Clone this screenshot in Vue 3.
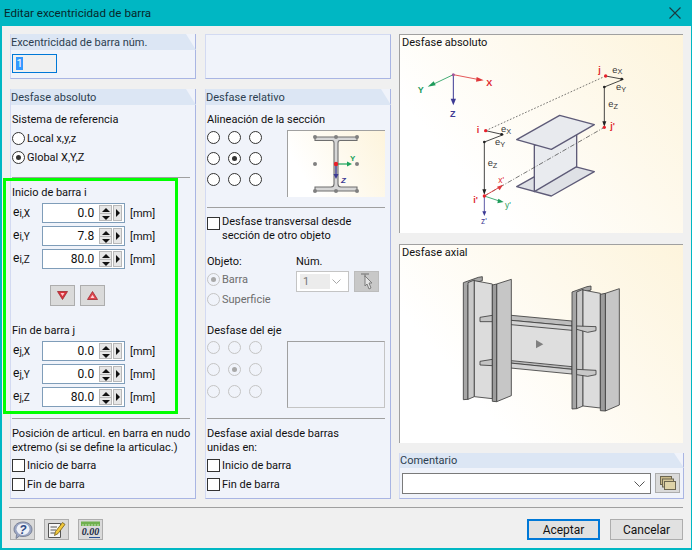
<template>
  <div class="window">
    <div class="titlebar">
      <span>Editar excentricidad de barra</span>
      <svg class="close" width="12" height="12" viewBox="0 0 12 12">
        <path d="M0.5 0.5 L11.5 11.5 M11.5 0.5 L0.5 11.5" stroke="#1a3a40" stroke-width="1.1" fill="none" />
      </svg>
    </div>

    <div class="main">
      <!-- columna izquierda -->
      <div class="col col-a">
        <section class="panel panel-num">
          <div class="panel-head">Excentricidad de barra núm.</div>
          <div class="num-input"><span class="num-sel">1</span></div>
        </section>

        <section class="panel panel-tall">
          <div class="panel-head">Desfase absoluto</div>
          <div class="line mt7">Sistema de referencia</div>
          <div class="choice mt3"><span class="radio"></span>Local x,y,z</div>
          <div class="choice"><span class="radio on"></span>Global X,Y,Z</div>
          <div class="sep sep-a"></div>

          <div class="line mt7">Inicio de barra i</div>
          <div class="spin-rows">
            <div v-for="row in startRows" :key="row.axis" class="spin-row">
              <span class="spin-label">e<sub>i,{{ row.axis }}</sub></span>
              <div class="spin-input">
                <span class="spin-value">{{ row.value }}</span>
                <span class="spin-ud"><i class="up"></i><i class="down"></i></span>
                <span class="spin-more"><i></i></span>
              </div>
              <span class="unit">[mm]</span>
            </div>
          </div>

          <div class="swap-btns">
            <button class="tool">
              <svg width="11" height="9" viewBox="0 0 11 9">
                <path d="M0.5 0.5 H10.5 L5.5 8.5 Z" fill="#d8323c" stroke="#a02a30" stroke-width="0.8" />
                <path d="M3.5 2 H7.5 L5.5 5.2 Z" fill="#ffc4c8" />
              </svg>
            </button>
            <button class="tool">
              <svg width="11" height="9" viewBox="0 0 11 9">
                <path d="M0.5 8.5 H10.5 L5.5 0.5 Z" fill="#e0464e" stroke="#a02a30" stroke-width="0.8" />
                <path d="M3.5 7 H7.5 L5.5 3.8 Z" fill="#ffd0d4" />
              </svg>
            </button>
          </div>

          <div class="line fin-title">Fin de barra j</div>
          <div class="spin-rows">
            <div v-for="row in endRows" :key="row.axis" class="spin-row">
              <span class="spin-label">e<sub>j,{{ row.axis }}</sub></span>
              <div class="spin-input">
                <span class="spin-value">{{ row.value }}</span>
                <span class="spin-ud"><i class="up"></i><i class="down"></i></span>
                <span class="spin-more"><i></i></span>
              </div>
              <span class="unit">[mm]</span>
            </div>
          </div>

          <div class="sep sep-b"></div>
          <div class="line mt7">Posición de articul. en barra en nudo</div>
          <div class="line">extremo (si se define la articulac.)</div>
          <div class="choice mt2"><span class="check"></span>Inicio de barra</div>
          <div class="choice"><span class="check"></span>Fin de barra</div>
        </section>

        <div class="green-frame"></div>
      </div>

      <!-- columna central -->
      <div class="col col-b">
        <section class="panel panel-num panel-blank"></section>

        <section class="panel panel-tall">
          <div class="panel-head">Desfase relativo</div>
          <div class="line mt7">Alineación de la sección</div>
          <div class="align-row">
            <div class="align-grid">
              <span v-for="n in 9" :key="n" class="radio" :class="{ on: n === 5 }"></span>
            </div>
            <div class="section-box">
              <svg width="98" height="67" viewBox="0 0 98 67">
                <path d="M28 7 H70 V10.5 H53 Q51 10.5 51 13 V54 Q51 57 54 57 H70 V61 H28 V57 H44 Q47 57 47 54 V13 Q47 10.5 45 10.5 H28 Z" fill="#d6d6d6" stroke="#6e6e6e" stroke-width="1.1" />
                <g fill="#808080">
                  <circle cx="28" cy="7" r="2" /><circle cx="49" cy="7" r="2" /><circle cx="70" cy="7" r="2" />
                  <circle cx="28" cy="34" r="2" /><circle cx="70" cy="34" r="2" />
                  <circle cx="28" cy="61" r="2" /><circle cx="49" cy="61" r="2" /><circle cx="70" cy="61" r="2" />
                </g>
                <path d="M49 34 H62" stroke="#1ba35c" stroke-width="1.2" />
                <path d="M60 31.5 L65 34 L60 36.5 Z" fill="#1ba35c" />
                <path d="M49 34 V46" stroke="#3c3a92" stroke-width="1.4" />
                <path d="M46.5 44 L49 49 L51.5 44 Z" fill="#3c3a92" />
                <circle cx="49" cy="34" r="2.2" fill="#e8202a" />
                <text x="63" y="31" class="sec-y">Y</text>
                <text x="54" y="53" class="sec-z">Z</text>
              </svg>
            </div>
          </div>
          <div class="sep sep-c"></div>

          <div class="check-long">
            <span class="check"></span>
            <span>Desfase transversal desde<br />sección de otro objeto</span>
          </div>

          <div class="object-row">
            <div class="object-left">
              <div class="line">Objeto:</div>
              <div class="choice off mt1"><span class="radio off on"></span>Barra</div>
              <div class="choice off"><span class="radio off"></span>Superficie</div>
            </div>
            <div>
              <div class="line">Núm.</div>
              <div class="combo-row">
                <div class="mini-combo">
                  <span class="mini-value">1</span>
                  <svg width="9" height="5" viewBox="0 0 9 5"><path d="M0.5 0.5 L4.5 4.5 L8.5 0.5" fill="none" stroke="#a8a8a8" /></svg>
                </div>
                <button class="pick">
                  <svg width="14" height="17" viewBox="0 0 14 17">
                    <path d="M1 1 H9 M5 1 V4" stroke="#8c8c8c" stroke-width="1.6" fill="none" />
                    <path d="M5 3 L12 10 H9 L11 15 L9 16 L7 11 L5 13 Z" fill="#e4e4e4" stroke="#7d7d7d" />
                  </svg>
                </button>
              </div>
            </div>
          </div>

          <div class="line axis-title">Desfase del eje</div>
          <div class="align-row">
            <div class="align-grid wide">
              <span v-for="n in 9" :key="n" class="radio off" :class="{ on: n === 5 }"></span>
            </div>
            <div class="section-box empty"></div>
          </div>
          <div class="sep sep-c"></div>

          <div class="line mt7">Desfase axial desde barras</div>
          <div class="line">unidas en:</div>
          <div class="choice mt2"><span class="check"></span>Inicio de barra</div>
          <div class="choice"><span class="check"></span>Fin de barra</div>
        </section>
      </div>

      <!-- columna derecha -->
      <div class="col col-c">
        <div class="picture">
          <span class="picture-title">Desfase absoluto</span>
          <svg width="284" height="199" viewBox="12 12 852 597">
            <!-- perfil -->
            <g stroke="#5e5b78" stroke-width="4" stroke-linejoin="round">
              <path d="M365 470 L494 398 L598 425 L469 498 Z" fill="#dfe1e6" />
              <path d="M418 346 L545 312 V410 L418 485 Z" fill="#e9ebef" />
              <path d="M365 329 L494 256 L598 284 L469 358 Z" fill="#e8eaee" />
            </g>
            <!-- lineas de desfase -->
            <path d="M272 302 L632 138" stroke="#333" stroke-width="2" stroke-dasharray="5 5" fill="none" />
            <path d="M268 498 L628 292" stroke="#333" stroke-width="2" stroke-dasharray="14 5 3 5" fill="none" />
            <!-- ejes globales -->
            <path d="M175 134 L258 150" stroke="#e0373a" stroke-width="2.5" />
            <path d="M245 141 L266 151 L243 155 Z" fill="#e0373a" />
            <path d="M175 134 L110 165" stroke="#1f9c5c" stroke-width="2.5" />
            <path d="M98 170 L116 154 L122 166 Z" fill="#1f9c5c" />
            <path d="M175 134 V215" stroke="#3d3a94" stroke-width="3" />
            <path d="M167 206 H183 L175 226 Z" fill="#3d3a94" />
            <circle cx="175" cy="134" r="4.5" fill="#a0569a" />
            <text x="274" y="167" class="d-big red">X</text>
            <text x="68" y="190" class="d-big green">Y</text>
            <text x="165" y="261" class="d-big blue">Z</text>
            <!-- nudo j -->
            <g stroke="#222" stroke-width="2.5" fill="none">
              <path d="M632 138 L685 148 L628 171 V285" />
              <path d="M272 302 L325 314 L268 336 V490" />
            </g>
            <g fill="#222">
              <circle cx="680" cy="147" r="4" /><circle cx="628" cy="171" r="4" />
              <circle cx="320" cy="313" r="4" /><circle cx="268" cy="336" r="4" />
              <path d="M622 274 H634 L628 290 Z" /><path d="M262 478 H274 L268 494 Z" />
            </g>
            <g class="d-e">
              <text x="652" y="128">e<tspan class="d-s" dy="5">X</tspan></text>
              <text x="663" y="180">e<tspan class="d-s" dy="5">Y</tspan></text>
              <text x="640" y="232">e<tspan class="d-s" dy="5">Z</tspan></text>
              <text x="318" y="306">e<tspan class="d-s" dy="5">X</tspan></text>
              <text x="300" y="345">e<tspan class="d-s" dy="5">Y</tspan></text>
              <text x="278" y="408">e<tspan class="d-s" dy="5">Z</tspan></text>
            </g>
            <!-- ejes locales -->
            <path d="M268 498 L316 470" stroke="#e0373a" stroke-width="2.5" />
            <path d="M306 470 L324 464 L314 481 Z" fill="#e0373a" />
            <path d="M268 498 L316 514" stroke="#1f9c5c" stroke-width="2.5" />
            <path d="M310 506 L326 516 L307 520 Z" fill="#1f9c5c" />
            <path d="M268 498 V546" stroke="#3d3a94" stroke-width="2.5" />
            <path d="M262 544 H274 L268 558 Z" fill="#3d3a94" />
            <circle cx="272" cy="302" r="5" fill="#e8202a" /><circle cx="632" cy="138" r="5" fill="#e8202a" />
            <circle cx="628" cy="292" r="5" fill="#e8202a" /><circle cx="268" cy="498" r="5" fill="#e8202a" />
            <text x="245" y="310" class="d-big red">i</text>
            <text x="610" y="128" class="d-big red">j</text>
            <text x="646" y="298" class="d-big red">j'</text>
            <text x="235" y="518" class="d-big red">i'</text>
            <text x="310" y="458" class="d-mid red">x'</text>
            <text x="330" y="534" class="d-mid green">y'</text>
            <text x="258" y="581" class="d-mid blue">z'</text>
          </svg>
        </div>

        <div class="picture">
          <span class="picture-title">Desfase axial</span>
          <svg width="284" height="199" viewBox="12 12 852 597" stroke="#3c3c3c" stroke-width="2.5" stroke-linejoin="round">
            <!-- columna izquierda, parte trasera -->
            <path d="M205 128 L250 112 L262 110 V122 L219 135 V478 L205 479 Z" fill="#a6a6a6" />
            <path d="M219 128 L238 120 V470 L219 478 Z" fill="#c9c9c9" />
            <path d="M238 122 L292 132 V476 L238 470 Z" fill="#dcdcdc" />
            <!-- viga -->
            <path d="M325 250 L531 268 V385 L325 368 Z" fill="#dedede" />
            <path d="M255 232 L292 226 V245 L255 245 Z" fill="#c4c4c4" />
            <path d="M305 237 L349 226 L531 243 V258 Z" fill="#bdbdbd" />
            <path d="M305 237 L531 258 V271 L305 250 Z" fill="#d4d4d4" />
            <path d="M255 364 L292 358 V377 L255 375 Z" fill="#c4c4c4" />
            <path d="M305 365 L349 362 L531 380 V388 Z" fill="#bdbdbd" />
            <path d="M305 365 L531 388 V402 L305 380 Z" fill="#d4d4d4" />
            <path d="M423 300 L445 313 L423 325 Z" fill="#808080" stroke="none" />
            <!-- columna izquierda, ala delantera -->
            <path d="M305 132 L349 118 V467 L305 485 Z" fill="#c6c6c6" />
            <path d="M292 135 L305 132 V485 L292 484 Z" fill="#9c9c9c" />
            <!-- columna derecha -->
            <path d="M531 156 L576 140 L588 138 V150 L545 163 V506 L531 507 Z" fill="#a6a6a6" />
            <path d="M545 156 L564 148 V498 L545 506 Z" fill="#c9c9c9" />
            <path d="M564 150 L616 160 V504 L564 498 Z" fill="#dcdcdc" />
            <path d="M545 258 L603 260 V272 L578 277 L545 268 Z" fill="#c8c8c8" />
            <path d="M545 388 L603 391 V404 L578 409 L545 404 Z" fill="#c8c8c8" />
            <path d="M631 160 L673 146 V495 L631 513 Z" fill="#c6c6c6" />
            <path d="M616 163 L631 160 V513 L616 512 Z" fill="#9c9c9c" />
          </svg>
        </div>

        <section class="panel panel-comment">
          <div class="panel-head">Comentario</div>
          <div class="comment-row">
            <div class="comment-combo">
              <svg width="11" height="6" viewBox="0 0 11 6"><path d="M0.5 0.5 L5.5 5.5 L10.5 0.5" fill="none" stroke="#555" /></svg>
            </div>
            <button class="tool comment-btn">
              <svg width="16" height="14" viewBox="0 0 16 14">
                <rect x="0.5" y="0.5" width="11" height="8" fill="#c9b98a" stroke="#6d6650" />
                <rect x="2.5" y="3" width="11" height="8" fill="#d5c799" stroke="#6d6650" />
                <rect x="4.5" y="5.5" width="11" height="8" fill="#dfd3a8" stroke="#6d6650" />
              </svg>
            </button>
          </div>
        </section>
      </div>
    </div>

    <div class="footer-sep"></div>
    <div class="footer">
      <div class="footer-tools">
        <button class="tool foot-btn">
          <svg width="20" height="18" viewBox="0 0 20 18">
            <path d="M10 1 C15 1 19 4 19 8.5 C19 13 15 15.5 10 15.5 C8.5 15.5 7.5 15.4 6.5 15 L3 17.5 L3.6 13.4 C2 12 1 10.5 1 8.5 C1 4 5 1 10 1 Z" fill="#9aa6c4" stroke="#6c7488" stroke-width="0.8" />
            <ellipse cx="10" cy="8.2" rx="6.5" ry="5.8" fill="#eef1f7" />
            <text x="10" y="13" class="help-mark">?</text>
          </svg>
        </button>
        <button class="tool foot-btn">
          <svg width="19" height="18" viewBox="0 0 19 18">
            <path d="M1.5 2.5 H13.5 V16.5 H1.5 Z" fill="#f6f6f6" stroke="#555" />
            <path d="M3.5 6 H10 M3.5 9 H9 M3.5 12 H8" stroke="#555" />
            <path d="M7.5 14.5 L8.5 10.5 L15.5 1.5 L18 3.4 L11 12.6 Z" fill="#f2c83a" stroke="#6e5a16" stroke-width="0.8" />
          </svg>
        </button>
        <button class="tool foot-btn">
          <svg width="21" height="18" viewBox="0 0 21 18">
            <rect x="1" y="0.5" width="19" height="4.5" fill="#6fb04e" />
            <path d="M3 3 V5 M6 3 V5 M9 3 V5 M12 3 V5 M15 3 V5 M18 3 V5" stroke="#d8eecb" stroke-width="0.8" />
            <text x="10.5" y="14" class="calc-text">0.00</text>
            <path d="M9 16.5 H20" stroke="#2a4f96" />
          </svg>
        </button>
      </div>
      <div class="footer-actions">
        <button class="action primary">Aceptar</button>
        <button class="action">Cancelar</button>
      </div>
    </div>
  </div>
</template>

<script setup>
const startRows = [
  { axis: 'X', value: '0.0' },
  { axis: 'Y', value: '7.8' },
  { axis: 'Z', value: '80.0' },
]
const endRows = [
  { axis: 'X', value: '0.0' },
  { axis: 'Y', value: '0.0' },
  { axis: 'Z', value: '80.0' },
]
</script>

<style>
html,
body {
  margin: 0;
  padding: 0;
}
</style>

<style scoped>
.window {
  width: 692px;
  height: 550px;
  box-sizing: border-box;
  border: solid #00b7c3;
  border-width: 0 1px 2px 2px;
  background: #f0f0f0;
  font-family: Roboto, "Liberation Sans", sans-serif;
  font-size: 11px;
  color: #101010;
  display: flex;
  flex-direction: column;
  overflow: hidden;
}

.titlebar {
  height: 26px;
  flex-shrink: 0;
  background: #00b7c3;
  margin-left: -2px;
  margin-right: -1px;
  padding: 0 11px 0 4px;
  display: flex;
  align-items: center;
  justify-content: space-between;
  font-size: 11.6px;
  color: #07272b;
}

.main {
  display: flex;
  padding: 8px 0 0 8px;
  height: 473px;
  box-sizing: border-box;
}

.col {
  position: relative;
  display: flex;
  flex-direction: column;
}

.col-a,
.col-b {
  width: 186px;
  gap: 10px;
}

.col-b {
  margin-left: 9px;
}

.col-c {
  width: 285px;
  margin-left: 8px;
}

.panel {
  box-sizing: border-box;
  background: #f0f3fa;
  border-right: 1px solid #a9b5e3;
  border-bottom: 1px solid #a9b5e3;
  border-left: 1px solid #d3daf2;
}

.panel-num {
  height: 45px;
}

.panel-tall {
  height: 410px;
  padding-right: 5px;
  padding-left: 1px;
}

.panel-blank {
  border-top: 1px solid #d3daf2;
}

.panel-head {
  height: 16px;
  line-height: 17px;
  background: #dce6f4;
  color: #2c3e50;
  clip-path: polygon(0 0, calc(100% - 10px) 0, 100% 100%, 0 100%);
  margin-right: -1px;
}

.panel-tall > .panel-head {
  margin-left: -1px;
  margin-right: -6px;
}

.num-input {
  width: 45px;
  height: 19px;
  box-sizing: border-box;
  margin: 4px 0 0 1px;
  border: 1px solid #0078d7;
  background: #f0f0f0;
  padding: 2px 0 0 3px;
}

.num-sel {
  display: block;
  width: 7px;
  height: 13px;
  line-height: 13px;
  background: #3399ff;
  color: #fff;
  text-align: center;
}

.line {
  height: 14px;
  line-height: 15px;
  white-space: nowrap;
}

.mt1 { margin-top: 1px; }
.mt2 { margin-top: 2px; }
.mt3 { margin-top: 3px; }
.mt7 { margin-top: 7px; }

.choice {
  height: 19px;
  display: flex;
  align-items: center;
  gap: 2px;
  white-space: nowrap;
}

.choice.off {
  height: 20px;
  color: #6d6d6d;
}

.radio {
  position: relative;
  display: block;
  width: 13px;
  height: 13px;
  box-sizing: border-box;
  border: 1px solid #333;
  border-radius: 50%;
  background: #fff;
  flex-shrink: 0;
}

.radio.on::after {
  content: "";
  position: absolute;
  left: 3px;
  top: 3px;
  width: 5px;
  height: 5px;
  border-radius: 50%;
  background: #333;
}

.radio.off {
  border-color: #c4c4c4;
  background: #f0f3fa;
}

.radio.off.on::after {
  background: #a8a8a8;
}

.check {
  display: block;
  width: 13px;
  height: 13px;
  box-sizing: border-box;
  border: 1px solid #333;
  background: #fff;
  flex-shrink: 0;
}

.sep {
  height: 1px;
  background: #a0a0a0;
}

.sep-a {
  margin-top: 10px;
}

.sep-b {
  margin-top: 11px;
}

.sep-c {
  margin-top: 10px;
}

.spin-rows {
  display: flex;
  flex-direction: column;
  gap: 3px;
  margin-top: 4px;
}

.spin-row {
  height: 20px;
  display: flex;
  align-items: center;
}

.spin-label {
  width: 30px;
  padding: 0 0 2px 1px;
  box-sizing: border-box;
  white-space: nowrap;
  font-size: 12px;
}

.spin-label sub {
  font-size: 10px;
  vertical-align: -1px;
  line-height: 0;
}

.spin-input {
  width: 83px;
  height: 20px;
  box-sizing: border-box;
  border: 1px solid #7f9db9;
  background: #fff;
  display: flex;
  align-items: stretch;
  padding: 1px 2px 1px 0;
  font-size: 12px;
}

.spin-value {
  width: 52px;
  text-align: right;
  line-height: 16px;
}

.spin-ud {
  width: 13px;
  margin-left: 5px;
  display: flex;
  flex-direction: column;
  background: #e6e6e6;
  border: 1px solid #b8b8b8;
  box-sizing: border-box;
}

.spin-ud i {
  flex: 1;
  position: relative;
}

.spin-ud .up {
  border-bottom: 1px solid #b8b8b8;
}

.spin-ud i::after {
  content: "";
  position: absolute;
  left: 2px;
  border-left: 4px solid transparent;
  border-right: 4px solid transparent;
}

.spin-ud .up::after {
  top: 2px;
  border-bottom: 4px solid #111;
}

.spin-ud .down::after {
  top: 2px;
  border-top: 4px solid #111;
}

.spin-more {
  width: 9px;
  margin-left: 1px;
  background: #e6e6e6;
  border: 1px solid #b8b8b8;
  box-sizing: border-box;
  display: flex;
  align-items: center;
  justify-content: center;
}

.spin-more i {
  border-top: 4px solid transparent;
  border-bottom: 4px solid transparent;
  border-left: 4px solid #111;
}

.unit {
  margin-left: 5px;
}

.swap-btns {
  display: flex;
  gap: 5px;
  margin: 16px 0 0 38px;
}

.tool {
  display: flex;
  align-items: center;
  justify-content: center;
  padding: 0;
  width: 25px;
  height: 21px;
  box-sizing: border-box;
  border: 1px solid #adadad;
  background: #dadada;
}

.fin-title {
  margin-top: 17px;
}

.green-frame {
  position: absolute;
  left: -7px;
  top: 144px;
  width: 175px;
  height: 236px;
  box-sizing: border-box;
  border: 3px solid #00ff00;
  pointer-events: none;
}

.align-row {
  display: flex;
  justify-content: space-between;
  margin-top: 4px;
}

.align-grid {
  display: grid;
  grid-template-columns: repeat(3, 13px);
  column-gap: 8px;
  row-gap: 8px;
  align-content: start;
  padding: 1px 0 0 0;
}

.align-grid.wide {
  row-gap: 9px;
  padding-top: 0;
}

.section-box {
  width: 98px;
  height: 67px;
  box-sizing: border-box;
  border-top: 1px solid #a0a0a0;
  border-left: 1px solid #a0a0a0;
  background: linear-gradient(60deg, #ffffff 20%, #fdf4dc 100%);
  overflow: hidden;
}

.section-box svg {
  display: block;
  margin: -1px 0 0 -1px;
}

.section-box.empty {
  background: #f0f3fa;
  border-bottom: 1px solid #c4c4c4;
  border-right: 1px solid #c4c4c4;
}

.sec-y {
  font: bold 8px "Liberation Sans", sans-serif;
  fill: #1ba35c;
}

.sec-z {
  font: italic bold 8px "Liberation Sans", sans-serif;
  fill: #3c3a92;
}

.check-long {
  display: flex;
  gap: 2px;
  margin-top: 7px;
  line-height: 13.5px;
  white-space: nowrap;
}

.check-long .check {
  margin-top: 2px;
}

.object-row {
  display: flex;
  margin-top: 12px;
}

.object-left {
  width: 89px;
}

.combo-row {
  display: flex;
  gap: 5px;
  margin-top: 3px;
}

.mini-combo {
  width: 53px;
  height: 21px;
  box-sizing: border-box;
  border: 1px solid #c4c4c4;
  background: #fff;
  display: flex;
  align-items: center;
  justify-content: space-between;
  padding: 0 7px 0 3px;
  color: #777;
}

.mini-value {
  width: 30px;
  height: 15px;
  line-height: 15px;
  background: #ececec;
  padding-left: 3px;
  box-sizing: border-box;
}

.pick {
  width: 25px;
  height: 21px;
  padding: 0;
  border: 1px solid #bcbcbc;
  background: #c8c8c8;
  display: flex;
  align-items: center;
  justify-content: center;
}

.axis-title {
  margin-top: 14px;
}

.picture {
  position: relative;
  width: 284px;
  height: 199px;
  box-sizing: border-box;
  margin-bottom: 11px;
  background: linear-gradient(50deg, #ffffff 25%, #fdf4dc 100%);
  box-shadow: inset 1px 1px 0 #a0a0a0;
  overflow: hidden;
}

.picture svg {
  display: block;
}

.picture-title {
  position: absolute;
  left: 3px;
  top: 2px;
  color: #111;
}

.d-big {
  font: bold 27px "Liberation Sans", sans-serif;
}

.d-mid {
  font: 25px "Liberation Sans", sans-serif;
}

.d-e {
  font: 28px "Liberation Sans", sans-serif;
  fill: #333;
}

.d-s {
  font-size: 22px;
}

.red {
  fill: #e0282e;
}

.green {
  fill: #1f9c5c;
}

.blue {
  fill: #3d3a94;
}

.panel-comment {
  height: 46px;
  margin-top: -1px;
}

.panel-comment .panel-head {
  height: 15px;
  line-height: 15px;
}

.comment-row {
  display: flex;
  gap: 4px;
  margin: 5px 0 0 2px;
}

.comment-combo {
  width: 249px;
  height: 21px;
  box-sizing: border-box;
  border: 1px solid #7a7a7a;
  background: #fff;
  display: flex;
  align-items: center;
  justify-content: flex-end;
  padding-right: 5px;
}

.comment-btn {
  height: 20px;
}

.footer-sep {
  height: 1px;
  margin: 8px 8px 0 7px;
  background: #a0a0a0;
}

.footer {
  display: flex;
  justify-content: space-between;
  padding: 11px 8px 0 8px;
}

.footer-tools {
  display: flex;
  gap: 9px;
}

.foot-btn {
  width: 25px;
  height: 21px;
}

.help-mark {
  font: italic bold 12px "Liberation Sans", sans-serif;
  fill: #2f4a86;
  text-anchor: middle;
}

.calc-text {
  font: italic bold 10px "Liberation Serif", serif;
  fill: #1c2c46;
  text-anchor: middle;
}

.footer-actions {
  display: flex;
  gap: 10px;
}

.action {
  width: 73px;
  height: 21px;
  padding: 0;
  box-sizing: border-box;
  border: 1px solid #adadad;
  background: #e1e1e1;
  font: 12px Roboto, "Liberation Sans", sans-serif;
  color: #111;
}

.action.primary {
  border: 2px solid #0078d7;
}
</style>
